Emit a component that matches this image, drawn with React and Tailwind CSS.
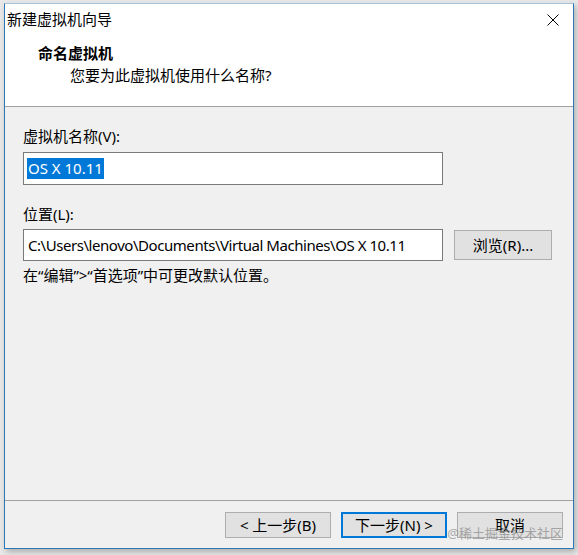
import React from "react";

const F = { fontFamily: '"Noto Sans", "Noto Sans CJK SC", sans-serif' };

function Btn({ children, primary, className = "" }) {
  return (
    <div
      className={
        "h-[26px] w-[106px] flex items-center justify-center text-[15px] text-black bg-[#e1e1e1] " +
        (primary ? "border-2 border-[#0078d7]" : "border border-[#adadad]") +
        " " +
        className
      }
    >
      {children}
    </div>
  );
}

export default function App() {
  return (
    <div
      className="w-[578px] h-[555px] bg-[#e8e8e8] pt-[3px] pl-[4px] overflow-hidden"
      style={F}
    >
      <div className="w-[570px] h-[546px] border border-[#2f78b8] border-t-[#a9c3da] bg-[#f0f0f0] flex flex-col shadow-[2px_3px_6px_rgba(0,0,0,0.25)] relative">
        {/* title bar */}
        <div className="h-[30px] bg-white flex items-center justify-between pl-[2px] pr-[14px] shrink-0">
          <span className="text-[15px] text-black leading-none mt-[1px]">新建虚拟机向导</span>
          <svg width="12" height="12" viewBox="0 0 12 12" className="mt-[2px]">
            <path d="M0.5 0.5 L11.5 11.5 M11.5 0.5 L0.5 11.5" stroke="#000" strokeWidth="1" />
          </svg>
        </div>
        {/* header */}
        <div className="h-[73px] bg-white border-b border-[#a0a0a0] shrink-0 pl-[33px] pt-[9px]">
          <div className="text-[15px] font-bold text-black leading-[20px]">命名虚拟机</div>
          <div className="text-[15px] text-black leading-[20px] pl-[32px] mt-[2px]">您要为此虚拟机使用什么名称?</div>
        </div>
        {/* body */}
        <div className="flex-1 pl-[18px] pt-[19px] flex flex-col">
          <div className="text-[15px] text-black leading-[20px]">虚拟机名称(V):</div>
          <div className="mt-[6px] w-[420px] h-[33px] bg-white border border-[#7a7a7a] flex items-center pl-[3px]">
            <span className="bg-[#0078d7] text-white text-[15px] leading-[21px] px-[1px]">OS X 10.11</span>
          </div>
          <div className="mt-[19px] text-[15px] text-black leading-[20px]">位置(L):</div>
          <div className="mt-[5px] flex items-center">
            <div className="w-[420px] h-[32px] bg-white border border-[#7a7a7a] flex items-center pl-[4px]">
              <span className="text-[15px] text-black leading-[20px] tracking-[-0.45px] whitespace-nowrap">
                C:\Users\lenovo\Documents\Virtual Machines\OS X 10.11
              </span>
            </div>
            <div className="ml-[11px] w-[98px] h-[30px] bg-[#e1e1e1] border border-[#adadad] flex items-center justify-center text-[15px] text-black">
              浏览(R)...
            </div>
          </div>
          <div className="mt-[4px] text-[15px] text-black leading-[20px]">在“编辑”&gt;“首选项”中可更改默认位置。</div>
        </div>
        {/* footer */}
        <div className="h-[48px] border-t border-[#a0a0a0] shrink-0 flex justify-end items-start pt-[11px] pr-[10px] gap-[10px]">
          <Btn>&lt; 上一步(B)</Btn>
          <Btn primary>下一步(N) &gt;</Btn>
          <Btn>取消</Btn>
        </div>
        <div className="absolute right-[10px] bottom-[8px] text-[13px] leading-none text-[#8a8a8a] opacity-70 whitespace-nowrap">
          @稀土掘金技术社区
        </div>
      </div>
    </div>
  );
}
